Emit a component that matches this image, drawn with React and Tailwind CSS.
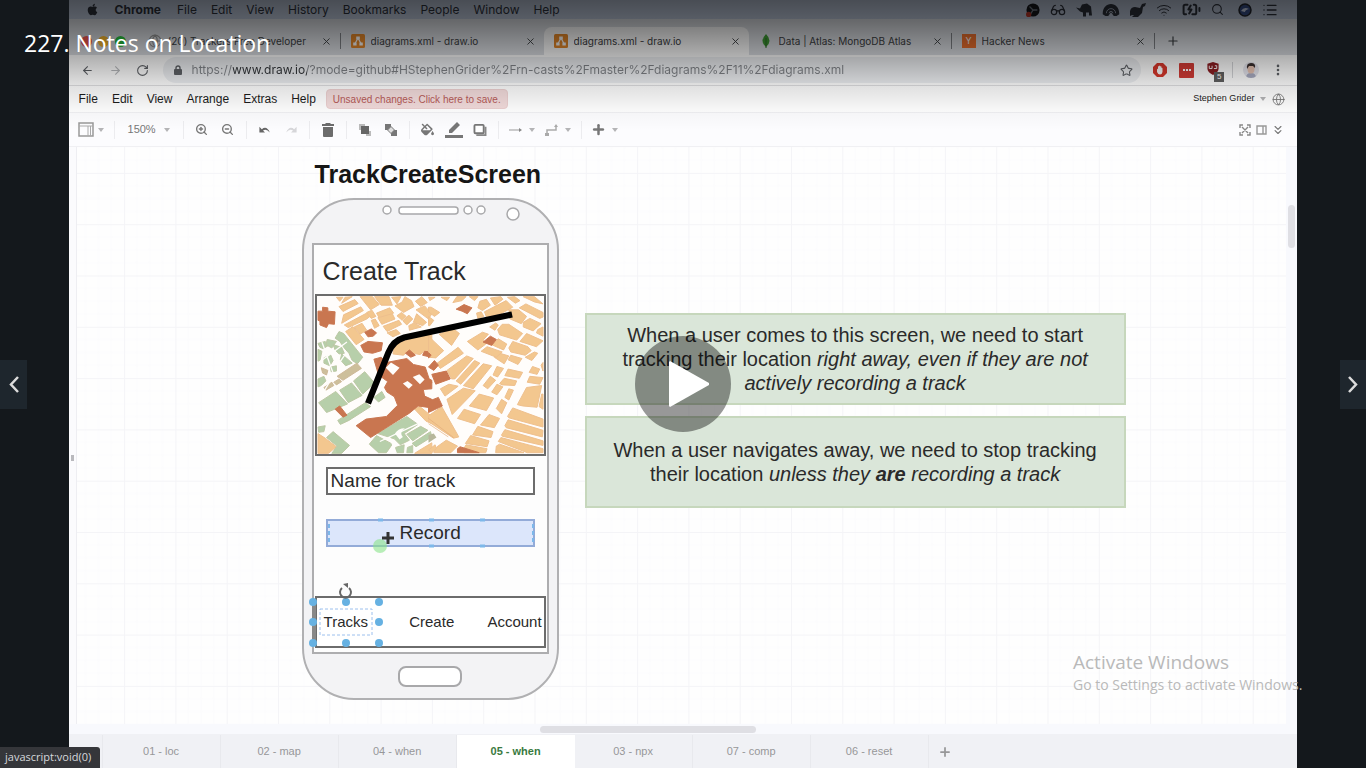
import React from "react";
import {
  ArrowLeft, ArrowRight, RotateCw, Lock, Star, MoreVertical, X, Plus, Search, Wifi, List, Globe,
  ChevronsDown, ZoomIn, ZoomOut, Glasses, BatteryCharging,
} from "lucide-react";
import { FaApple, FaFillDrip } from "react-icons/fa";

const macMenus = ["File", "Edit", "View", "History", "Bookmarks", "People", "Window", "Help"];
const drawMenus = ["File", "Edit", "View", "Arrange", "Extras", "Help"];
const pages = ["01 - loc", "02 - map", "04 - when", "05 - when", "03 - npx", "07 - comp", "06 - reset"];

const mapLeftOrange = [
  "68,14 88,14 78,26", "94,14 116,12 84,32", "76,42 124,21 134,33 88,57", "90,67 142,43 150,54 84,93",
  "92,98 160,62 170,72 160,80 104,106", "96,118 118,103 152,142 128,158", "122,104 146,93 160,114 140,126",
  "140,12 178,12 198,36 172,52", "184,12 228,12 238,38 204,38", "160,60 176,53 188,72 174,78",
  "190,62 230,46 242,62 200,80", "174,84 186,80 198,100 184,108", "194,76 238,64 246,80 206,96",
  "210,102 258,84 266,96 222,118", "222,122 250,112 262,124 240,134", "236,14 264,12 252,34",
  "246,40 268,28 276,12 296,24 304,42 272,60", "252,70 266,60 280,72 268,84", "270,86 288,68 300,80 282,98",
  "308,26 328,12 344,30 324,42", "310,52 336,40 358,64 348,80", "312,64 342,90 330,100 302,90",
  "288,100 304,92 326,104 290,114", "242,172 252,152 358,122 358,188 336,178 322,188 300,184 286,176 272,190 240,186",
  "12,428 34,442 68,468 44,488 12,488", "304,352 322,346 358,376 358,398 340,390", "318,480 358,456 358,488 306,488",
];
const mapLeftBrown = [
  "12,56 26,56 26,44 42,46 42,56 64,58 62,96 44,94 38,106 18,98 18,86 12,84",
  "154,120 174,110 190,122 180,132 164,134", "142,160 164,148 208,152 204,176 178,184 152,180",
  "278,184 290,174 308,190 294,196", "330,190 336,178 352,180 356,196",
  "182,202 204,196 220,212 282,200 302,218 338,226 350,262 358,266 358,292 332,294 336,314 358,324 358,350 316,344 290,366 172,440 128,404 158,384 220,376 254,342 244,316 222,302 214,288 224,270 196,250",
  "64,354 78,344 100,372 88,378",
];
const mapLeftGreen = [
  "12,154 34,148 44,160 28,170 18,166", "40,142 68,148 54,168 36,158", "76,118 90,124 148,196 132,216 116,206 106,184 92,168 78,148 64,138",
  "30,198 50,188 58,206 48,222 30,214", "58,158 84,166 92,184 76,186 64,174", "84,186 116,214 96,222 80,204", "12,172 24,178 18,206 12,208",
  "12,262 30,254 36,268 22,282 12,286", "50,226 68,222 68,238 52,240", "120,268 154,240 184,274 148,308",
  "78,296 114,274 146,312 104,334", "14,334 66,300 102,338 38,364", "182,318 206,300 216,318 196,332",
  "72,388 156,334 172,346 106,388 80,400", "12,408 34,404 30,422 14,424", "38,440 58,422 108,464 84,488 54,488 70,466",
  "194,428 268,384 282,376 316,400 274,428 290,448 262,462 244,444", "168,460 190,434 238,460 220,486 196,486",
  "282,430 324,406 346,418 300,450", "298,458 354,422 358,438 310,468", "248,470 274,462 272,486 250,486", "284,470 300,464 300,486 282,486",
];
const mapLeftKhaki = ["30,288 54,272 60,282 36,296", "70,254 130,214 144,230 88,266", "22,228 42,236 38,250 26,244", "60,272 76,262 84,270 68,280"];
const mapRightOrange = [
  "0,14 20,14 4,24", "0,44 8,44 34,60 18,72 0,58", "0,72 16,84 4,100 0,100", "38,14 64,14 56,24", "74,30 86,12 114,12 102,24",
  "124,12 150,12 140,24", "156,26 176,20 188,38 164,54 150,46", "146,62 160,58 168,72 150,78", "170,58 236,24 256,44 220,64 176,74",
  "188,16 220,12 226,20 202,38", "240,14 262,12 278,24 264,32", "288,12 322,12 348,34 322,28", "276,46 296,34 348,60 348,74 338,78",
  "244,52 274,52 298,72 282,94 248,80", "288,90 308,78 342,94 318,116 288,104", "210,112 224,96 244,96 286,124 268,144 216,128",
  "186,104 204,92 212,98 202,114", "332,112 348,104 348,132 328,122", "278,148 298,124 348,146 328,164",
  "244,168 256,148 302,164 312,176 294,190 250,180", "294,196 322,180 332,184 314,206", "250,190 284,200 272,218 242,204",
  "200,196 210,182 244,192 230,216", "160,178 178,164 224,180 206,196", "118,148 164,120 182,126 166,144 174,156 150,174",
  "192,158 212,140 238,156 228,174", "32,126 74,108 94,124 70,160", "0,132 46,176 22,198 0,196",
  "24,216 90,166 106,184 36,230", "56,236 116,192 136,200 80,262 70,262", "84,268 140,206 156,214 98,278", "106,282 166,216 192,222 136,292",
  "36,292 62,278 90,284 50,314", "56,324 106,290 142,298 72,370", "196,250 208,224 228,230 210,256", "166,282 188,254 204,266 180,292",
  "232,252 242,232 286,242 276,260", "216,276 230,260 268,268 262,282 224,280", "192,302 208,278 226,286 208,310", "232,318 244,292 258,296 244,326",
  "306,242 316,224 338,232 330,248", "300,272 308,254 348,258 338,278", "342,220 348,212 348,238", "270,340 298,288 344,282 330,348 286,344",
  "124,344 154,308 198,320 176,358", "206,352 222,324 238,334 222,368", "88,382 108,354 158,370 140,398", "158,402 184,370 216,382 200,410",
  "336,346 344,308 348,308 348,354", "240,376 256,350 348,384 348,408 244,380", "232,404 242,386 348,418 346,438 236,410",
  "222,432 232,416 348,450 348,464 224,436", "212,452 220,440 348,474 348,486 300,486", "206,466 216,460 290,486 204,486",
  "134,432 150,406 196,422 190,440", "112,458 128,434 184,450 178,468", "106,476 114,462 178,474 174,486 108,486",
  "0,374 40,346 92,438 76,442 0,392", "26,468 54,448 88,466 68,486 16,486", "0,478 20,462 24,474 10,486",
];
const mapRightBrown = [
  "84,50 108,36 132,46 118,64 102,56", "166,150 188,132 206,142 192,160", "0,226 18,206 30,220 16,236", "10,248 54,238 66,262 22,278",
  "0,262 10,272 0,286", "0,330 30,318 42,344 0,364", "88,474 96,468 154,486 88,486", "0,182 8,190 0,198",
];

function Polys({ list, fill, edge }) {
  return list.map((p) => <polygon key={p} points={p} fill={fill} stroke={edge} strokeWidth="3" strokeLinejoin="round" />);
}

function StreetMap() {
  return (
    <svg viewBox="75 436 690 480" preserveAspectRatio="none" className="block h-full w-full" role="img" aria-label="Street map">
      <rect x="75" y="436" width="690" height="480" fill="#fffdfb" />
      <g transform="translate(66 426)">
        <Polys list={mapLeftOrange} fill="#f3c78f" edge="#eebf8d" />
        <Polys list={mapLeftGreen} fill="#b7cfaa" edge="#bcc7a4" />
        <Polys list={mapLeftKhaki} fill="#cdbf9b" edge="#cdb898" />
        <Polys list={mapLeftBrown} fill="#c97650" edge="#c97650" />
        <g fill="#fffdfb">
          <path d="M218 228l16-16 26 16-20 22zM270 276l14-8 16 12-12 12zM300 256l20-8 16 16-14 14z" />
          <path d="M246 428q10-16 30-16q-18 14-6 26l-10 8z" />
        </g>
        <g fill="none" stroke="#fffdfb" strokeWidth="4">
          <path d="M12 214L100 150M24 150L60 250M60 250L30 300M200 452L320 396M230 440L250 488M100 180L72 220" />
        </g>
      </g>
      <g transform="translate(414 426)">
        <Polys list={mapRightOrange} fill="#f3c78f" edge="#eebf8d" />
        <Polys list={mapRightBrown} fill="#c97650" edge="#c97650" />
        <path d="M0 382L76 440M0 398L60 438" stroke="#e2ab78" strokeWidth="2" />
        <polygon points="0,432 16,428 24,440 0,456" fill="#b7b79b" />
      </g>
      <path d="M230 762L292 608Q306 572 340 562L668 492" fill="none" stroke="#000" strokeWidth="19" />
    </svg>
  );
}

function Caret() {
  return (
    <svg viewBox="0 0 6 4" className="h-1 w-1.5 shrink-0 fill-[#b4b4b6]"><path d="M0 0h6L3 4z" /></svg>
  );
}

function Sep() {
  return <span className="mx-[5px] h-[18px] w-px shrink-0 bg-[#ececef]" />;
}

function Tool({ label, children }) {
  return (
    <button aria-label={label} className="flex h-6 w-[26px] shrink-0 items-center justify-center text-[#777777]">{children}</button>
  );
}

function DrawIcon() {
  return (
    <svg viewBox="0 0 14 14" className="h-3.5 w-3.5 shrink-0">
      <rect width="14" height="14" rx="1.5" fill="#e88a2a" />
      <path d="M7 4L3.8 10M7 4l3.2 6" stroke="#fff" strokeWidth="1.2" />
      <path d="M5.2 2.5h3.6v3H5.2zM2.2 8.5h3.4v3H2.2zM8.4 8.5h3.4v3H8.4z" fill="#fff" />
    </svg>
  );
}

function BrowserTab({ icon, title, active, divider }) {
  const shape = active
    ? "flex h-7 w-[205px] shrink-0 items-center rounded-t-lg bg-white pl-2.5 pr-2"
    : divider
      ? "flex h-7 w-[203px] shrink-0 items-center pl-2.5"
      : "flex h-7 w-[203px] shrink-0 items-center pl-2.5 pr-2";
  return (
    <div className={shape}>
      {icon}
      <a href="#tab" className="ml-1.5 min-w-0 flex-1 overflow-hidden whitespace-nowrap font-['Inter',sans-serif] text-[10px] text-[#3c4043]">{title}</a>
      <button aria-label={"Close " + title} className="text-[#3c4043]"><X size={11} strokeWidth={2} /></button>
      {divider && <span className="ml-2 h-4 w-px bg-[#808388]" />}
    </div>
  );
}

function MenuBar() {
  return (
    <div className="flex h-[19px] shrink-0 items-center bg-[#bfcadd] pl-[17px] pr-[19px] font-['Inter',sans-serif] text-[12px] text-[#2c313b]">
      <FaApple size={13} className="mr-4" />
      <button className="mr-4 font-bold">Chrome</button>
      <nav className="flex gap-3.5">
        {macMenus.map((m) => <button key={m}>{m}</button>)}
      </nav>
      <div className="ml-auto flex items-center gap-2.5">
        <svg viewBox="0 0 16 16" className="h-3.5 w-3.5"><circle cx="8" cy="8" r="7.5" fill="#15171c" /><path d="M8 8L4 4M8 8h5M8 8l-3 5" stroke="#77808e" strokeWidth="1.5" /><circle cx="3" cy="13" r="3" fill="#c0392b" /></svg>
        <Glasses size={16} strokeWidth={1.8} />
        <svg viewBox="0 0 16 13" className="h-3.5 w-4"><path fill="currentColor" d="M0 4l4 1 2-4 5-1 4 3 1 9h-3V9h-3v4H7V9L4 8z" /></svg>
        <svg viewBox="0 0 18 13" className="h-3 w-[18px]"><path fill="currentColor" d="M0 11C0 4 4 0 9 0s9 4 9 11l-3 2h-3l-3-4-3 4H3z" /><path d="M4 10a5 5 0 0 1 10 0M7 10a2 2 0 0 1 4 0" fill="none" stroke="#aab4c6" /></svg>
        <svg viewBox="0 0 16 14" className="h-3.5 w-4"><path fill="currentColor" d="M0 8q1-4 5-4l5 1 2-4 4-1-1 3-2 1-1 6-4 4H2l2-2q-3 0-4 1z" /></svg>
        <Wifi size={16} strokeWidth={1.5} />
        <BatteryCharging size={19} strokeWidth={2.5} />
        <Search size={13} />
        <svg viewBox="0 0 14 14" className="ml-1 h-3.5 w-3.5"><circle cx="7" cy="7" r="6" fill="#38508c" stroke="#20242c" strokeWidth="1.5" /><path d="M3 8q3-5 8-2q-4 1-4 3z" fill="#d4def4" /></svg>
        <List size={16} />
      </div>
    </div>
  );
}

function TabStrip() {
  return (
    <div className="flex h-9 shrink-0 items-end bg-[#dee1e6]">
      <div className="flex h-7 w-[69px] shrink-0 items-center gap-1.5 pl-3">
        <span className="h-[11px] w-[11px] rounded-full bg-[#fb5a52]" />
        <span className="h-[11px] w-[11px] rounded-full bg-[#fdbc2e]" />
        <span className="h-[11px] w-[11px] rounded-full bg-[#2ac840]" />
      </div>
      <BrowserTab icon={<Globe size={14} className="shrink-0 text-[#999]" />} title="(20) Trackers Free Developer" divider />
      <BrowserTab icon={<DrawIcon />} title="diagrams.xml - draw.io" />
      <BrowserTab icon={<DrawIcon />} title="diagrams.xml - draw.io" active />
      <BrowserTab
        icon={<svg viewBox="0 0 14 14" className="h-3.5 w-3.5 shrink-0"><path d="M7 0Q14 7 7 13Q0 7 7 0z" fill="#3f9c35" /><path d="M7 4v10" stroke="#2d7028" /></svg>}
        title="Data | Atlas: MongoDB Atlas" divider
      />
      <BrowserTab
        icon={<span className="flex h-3.5 w-3.5 shrink-0 items-center justify-center bg-[#f0722f] font-['Inter',sans-serif] text-[9px] text-white">Y</span>}
        title="Hacker News" divider
      />
      <button aria-label="New tab" className="flex h-7 w-9 items-center justify-center text-[#3c4043]"><Plus size={14} /></button>
    </div>
  );
}

function AddressBar() {
  return (
    <div className="flex h-[31px] shrink-0 items-center border-b border-[#e0e0e2] bg-white pl-3 pr-3 text-[#5f6267]">
      <button aria-label="Back" className="mr-[15px]"><ArrowLeft size={13} /></button>
      <button aria-label="Forward" className="mr-3.5 text-[#b8babd]"><ArrowRight size={13} /></button>
      <button aria-label="Reload" className="mr-3.5"><RotateCw size={13} /></button>
      <div className="flex h-[26px] min-w-0 flex-1 items-center rounded-full bg-[#eef0f3] pl-2.5 pr-2">
        <svg viewBox="0 0 8 10" className="ml-px mr-2.5 h-2.5 w-2 shrink-0"><rect y="4" width="8" height="6" rx="1" fill="#5f6267" /><path d="M2 5V3a2 2 0 0 1 4 0v2" fill="none" stroke="#5f6267" strokeWidth="1.4" /></svg>
        <input
          aria-label="Address"
          defaultValue="https://www.draw.io/?mode=github#HStephenGrider%2Frn-casts%2Fmaster%2Fdiagrams%2F11%2Fdiagrams.xml"
          className="min-w-0 flex-1 bg-[linear-gradient(90deg,#808388_41px,#2f3236_41px,#2f3236_115px,#808388_115px)] bg-clip-text font-['Inter',sans-serif] text-[12px] text-transparent outline-none"
        />
        <Star size={13} className="shrink-0" />
      </div>
      <div className="ml-3 flex items-center gap-3">
        <svg viewBox="0 0 14 14" className="h-3.5 w-3.5"><path d="M4 0h6l4 4v6l-4 4H4l-4-4V4z" fill="#d9382c" /><path d="M4 6q1-1 1 1V3.500q1-.8 1 0V3q1-.8 1.300 0v.500q1-.6 1.200.300V5q1-.5 1 .5V9q-.5 2.500-2.500 2.500T4 9z" fill="#fff" /></svg>
        <span className="flex h-[15px] w-[15px] items-center justify-center gap-px rounded-[1px] bg-[#d33c36]">
          <i className="h-0.5 w-0.5 bg-white" /><i className="h-0.5 w-0.5 bg-white" /><i className="h-0.5 w-0.5 bg-white" />
        </span>
        <span className="relative h-4 w-[18px]">
          <svg viewBox="0 0 14 15" className="h-3.5 w-3.5"><path d="M7 0l6 2v5q0 4-6 7Q1 11 1 7V2z" fill="#8c1d22" /><path d="M3 4v3h3V4M9 4h2v3H8" stroke="#fff" fill="none" /></svg>
          <span className="absolute -bottom-1 right-0 bg-[#606060] px-[3px] text-[8px] leading-[10px] text-white">5</span>
        </span>
        <span className="-ml-1 h-4 w-px bg-[#d4d5d8]" />
      </div>
      <svg viewBox="0 0 16 16" className="ml-2.5 h-4 w-4 rounded-full">
        <rect width="16" height="16" fill="#e6e6ee" /><path d="M3 16q0-5 5-5t5 5z" fill="#a9acc2" /><ellipse cx="8" cy="7" rx="3.5" ry="4.5" fill="#e9c5b4" /><path d="M4 7q-1-6 4-6t4 5l-2-2H6z" fill="#3a2f2e" />
      </svg>
      <button aria-label="Browser menu" className="ml-3"><MoreVertical size={14} strokeWidth={2.5} /></button>
    </div>
  );
}

function DrawMenu() {
  return (
    <div className="flex h-[26px] shrink-0 items-center bg-white pl-2.5 pr-3 text-[12px] text-[#1c1c1c]">
      <nav className="flex gap-3.5">
        {drawMenus.map((m) => <button key={m}>{m}</button>)}
      </nav>
      <button className="ml-2.5 h-5 rounded-sm border border-[#ecd0d0] bg-[#f2dbdb] px-1.5 text-[10px] text-[#b65a58]">Unsaved changes. Click here to save.</button>
      <button className="ml-auto flex items-center gap-1.5 text-[9px]">Stephen Grider <Caret /></button>
      <button aria-label="Language" className="ml-1.5 text-[#777]"><Globe size={13} strokeWidth={1.6} /></button>
    </div>
  );
}

function Toolbar() {
  return (
    <div className="flex h-[35px] shrink-0 items-center border-y border-[#f0f0f3] bg-[#fcfcfe] pl-1 pr-3 text-[#777]">
      <button aria-label="View" className="flex w-9 shrink-0 items-center justify-center gap-1">
        <svg viewBox="0 0 16 15" className="h-[15px] w-4"><rect x="1" y="1" width="14" height="13" fill="none" stroke="#999" strokeWidth="1.5" /><path d="M1 4h14M10 4v10M12.5 4v10" stroke="#aaa" /></svg>
        <Caret />
      </button>
      <Sep />
      <button className="flex w-[58px] shrink-0 items-center justify-center gap-2 text-[11px]">150% <Caret /></button>
      <Sep />
      <Tool label="Zoom in"><ZoomIn size={13} strokeWidth={2.5} /></Tool>
      <Tool label="Zoom out"><ZoomOut size={13} strokeWidth={2.5} /></Tool>
      <Sep />
      <Tool label="Undo"><svg viewBox="0 0 14 10" className="h-2 w-3"><path d="M0 1v7h7L4.5 5.5Q9 3 13 8Q9-1 3 4z" fill="#666" /></svg></Tool>
      <Tool label="Redo"><svg viewBox="0 0 14 10" className="h-2 w-3"><path d="M14 1v7H7l2.500-2.500Q5 3 1 8Q5-1 11 4z" fill="#d6d6d9" /></svg></Tool>
      <Sep />
      <Tool label="Delete"><svg viewBox="0 0 12 14" className="h-3.5 w-3"><path d="M4 0h4l1 1h3v2H0V1h3zM1 4h10v9q0 1-1 1H2q-1 0-1-1z" fill="#6c6c6c" /></svg></Tool>
      <Sep />
      <Tool label="To front"><svg viewBox="0 0 14 14" className="h-3.5 w-3.5"><path d="M1 1h6v6H1zM8 8h5v5H8z" fill="#bbb" /><rect x="3" y="3" width="8" height="8" fill="#666" /></svg></Tool>
      <Tool label="To back"><svg viewBox="0 0 14 14" className="h-3.5 w-3.5"><rect x="1" y="1" width="6" height="6" fill="#777" /><rect x="7" y="7" width="6" height="6" fill="#777" /><path d="M3.500 7L7 3.500 10.500 7 7 10.500z" fill="#ddd" stroke="#777" /></svg></Tool>
      <Sep />
      <Tool label="Fill colour"><FaFillDrip size={13} /></Tool>
      <Tool label="Line colour"><svg viewBox="0 0 18 16" className="h-4 w-[18px]"><path d="M4 11V8l8-8 3 3-8 8zM0 13h18v3H0z" fill="#777" /></svg></Tool>
      <Tool label="Shadow"><svg viewBox="0 0 14 13" className="h-3 w-3.5"><path d="M3 12h10V3" fill="none" stroke="#888" strokeWidth="2" /><rect x="1" y="1" width="10" height="9" rx="1" fill="#fff" stroke="#777" strokeWidth="2" /></svg></Tool>
      <Sep />
      <button aria-label="Connection" className="flex w-9 shrink-0 items-center justify-center gap-1.5"><svg viewBox="0 0 14 8" className="h-2 w-3.5"><path d="M0 4h11" stroke="#999" /><path d="M10 2l3 2-3 2z" fill="#888" /></svg><Caret /></button>
      <button aria-label="Waypoints" className="flex w-9 shrink-0 items-center justify-center gap-1.5"><svg viewBox="0 0 14 14" className="h-3.5 w-3.5"><path d="M2 12V7h9V3" stroke="#aaa" fill="none" strokeWidth="1.5" /><path d="M9 4l2-3 2 3zM0 10h4v3H0z" fill="#aaa" /></svg><Caret /></button>
      <Sep />
      <button aria-label="Insert" className="flex w-9 shrink-0 items-center justify-center gap-1.5"><Plus size={15} strokeWidth={4} /><Caret /></button>
      <div className="ml-auto flex items-center gap-1">
        <button aria-label="Fullscreen"><svg viewBox="0 0 12 12" className="h-3 w-3"><path d="M1 4V1h3M8 1h3v3M11 8v3H8M4 11H1V8M3 3l6 6M9 3L3 9" fill="none" stroke="#888" strokeWidth="1.4" /></svg></button>
        <button aria-label="Format panel"><svg viewBox="0 0 12 12" className="h-3 w-3"><path d="M2 2h9v8H2zM8 2v8" fill="none" stroke="#999" strokeWidth="1.4" /></svg></button>
        <button aria-label="Collapse"><ChevronsDown size={14} strokeWidth={2} /></button>
      </div>
    </div>
  );
}

const handles = [[11, 404], [44, 404], [77, 404], [11, 424], [77, 424], [11, 445], [44, 445], [77, 445]];

function Phone() {
  return (
    <div className="absolute left-[225px] top-[51px] flex h-[502px] w-[257px] flex-col rounded-[52px] border-2 border-[#b0b0b2] bg-[#f3f3f5] px-2 text-[#2a2a2a]">
      <svg viewBox="0 0 236 43" className="h-[43px] w-[236px] shrink-0 fill-white stroke-[#a8a8aa]" strokeWidth="1.5">
        <circle cx="75" cy="10" r="4" /><rect x="87" y="7" width="59" height="7" rx="3" /><circle cx="156" cy="10" r="4" /><circle cx="169" cy="10" r="4" /><circle cx="201" cy="14" r="6" />
      </svg>
      <div className="flex h-[411px] shrink-0 flex-col border-2 border-[#adadaf] bg-white/80 px-px">
        <h2 className="flex h-[49px] shrink-0 items-center pl-2 pt-1 text-[25px]">Create Track</h2>
        <div className="h-[162px] shrink-0 border-2 border-[#6c6c6c]"><StreetMap /></div>
        <div className="mx-[11px] mt-[11px] flex h-7 shrink-0 items-center border-2 border-[#6c6c6c] bg-white px-[3px] pt-px text-[19px]">Name for track</div>
        <div className="mx-[11px] mt-6 flex h-7 shrink-0 items-center justify-center border-2 border-[#93abd8] bg-[#dce6fb] pt-px text-[19px]">Record</div>
        <div className="mb-1 mt-auto flex h-[52px] shrink-0 items-center justify-between border-2 border-[#6c6c6c] bg-white pl-[7px] pr-0.5 pt-px text-[15px]">
          <span>Tracks</span><span className="pl-2">Create</span><span>Account</span>
        </div>
      </div>
      <div className="mx-auto mt-3 h-[21px] w-16 shrink-0 rounded-lg border-2 border-[#a8a8aa] bg-white" />
      <svg viewBox="0 0 258 502" className="pointer-events-none absolute -left-0.5 -top-0.5 h-[502px] w-[258px]">
        <path d="M12 406v38" stroke="#888" strokeWidth="4" />
        <rect x="18" y="411" width="52" height="26" fill="none" stroke="#9cc0ee" strokeDasharray="3 2" />
        {handles.map(([x, y]) => <circle key={x + "-" + y} cx={x} cy={y} r="4" fill="#66b1e2" />)}
        <path d="M40 390a5.500 5.500 0 1 0 7 0" fill="none" stroke="#666" strokeWidth="2" /><path d="M41 386l5-1 0 5z" fill="#666" />
        <path d="M27 326v18M231 326v18" stroke="#7db8ea" strokeWidth="2" strokeDasharray="4 3" />
        <path d="M76 322h5M127 322h5M178 322h5M127 348h5M178 348h5" stroke="#7db8ea" strokeWidth="3" />
        <circle cx="78" cy="348" r="7" fill="#8be58b" fillOpacity="0.6" />
        <path d="M86 334v12M80 340h12" stroke="#333" strokeWidth="3" />
      </svg>
    </div>
  );
}

function Note({ place, children }) {
  return (
    <div className={"absolute left-[508px] flex h-[92px] w-[541px] items-center justify-center border-2 border-[#c6d7bc] bg-[#dae6d9] px-5 text-center text-[20px] leading-6 text-[#2a2a2a] " + place}>
      <p>{children}</p>
    </div>
  );
}

function Canvas() {
  return (
    <div className="flex min-h-0 flex-1 flex-col">
      <div className="flex min-h-0 flex-1">
        <div className="flex w-2 shrink-0 items-center justify-center border-r border-[#eeeef2] bg-[#fbfbfd]">
          <span className="mt-11 h-1.5 w-[3px] bg-[#b9b9bd]" />
        </div>
        <div className="relative min-w-0 flex-1 overflow-hidden bg-[#fefefe]">
          <svg className="absolute inset-0 h-full w-full" aria-hidden="true">
            <defs>
              <pattern id="grid" x="47.1" y="25.9" width="51.3" height="51.3" patternUnits="userSpaceOnUse">
                <path d="M12.800 0v51.300M25.600 0v51.300M38.500 0v51.300M0 12.800h51.300M0 25.600h51.300M0 38.500h51.300" stroke="#fbfbfd" fill="none" />
                <path d="M0.500 0v51.300M0 0.500h51.300" stroke="#f4f4f7" fill="none" />
              </pattern>
            </defs>
            <rect width="100%" height="100%" fill="url(#grid)" />
          </svg>
          <h1 className="absolute left-[238px] top-3 text-[25px] font-bold leading-[30px] text-[#161616]">TrackCreateScreen</h1>
          <Phone />
          <Note place="top-[166px]">
            When a user comes to this screen, we need to start<br />tracking their location <em>right away, even if they are not<br />actively recording a track</em>
          </Note>
          <Note place="top-[269px]">
            When a user navigates away, we need to stop tracking<br />their location <em>unless they <b>are</b> recording a track</em>
          </Note>
        </div>
        <div className="w-[11px] shrink-0 bg-[#f8f9fd] pl-0.5 pt-[58px]"><div className="h-[43px] w-[7px] rounded-full bg-[#dfdfe4]" /></div>
      </div>
      <div className="flex h-2.5 shrink-0 items-center bg-[#f8f9fd] pl-[471px]"><div className="h-[7px] w-[216px] rounded-full bg-[#dfdfe4]" /></div>
      <div className="flex h-[34px] shrink-0 bg-[#f0f1f5] pt-px text-[11px] text-[#979799]">
        <button aria-label="Pages" className="flex w-[34px] shrink-0 items-center justify-center border-r border-[#e8e9ed]"><MoreVertical size={12} /></button>
        {pages.map((p) => (
          <button key={p} className={p === "05 - when"
            ? "w-[118px] shrink-0 bg-white font-bold text-[#3a7a3e]"
            : "w-[118px] shrink-0 border-r border-[#e8e9ed]"}>{p}</button>
        ))}
        <button aria-label="Insert page" className="flex w-8 items-center justify-center"><Plus size={14} strokeWidth={3} /></button>
      </div>
    </div>
  );
}

export default function App() {
  return (
    <main className="relative flex h-screen justify-center overflow-hidden bg-[#14181c] font-['Liberation_Sans',Arial,sans-serif]">
      <section className="relative flex aspect-[16/10] h-full flex-col overflow-hidden bg-white">
        <MenuBar />
        <TabStrip />
        <AddressBar />
        <DrawMenu />
        <Toolbar />
        <Canvas />
        <div className="pointer-events-none absolute inset-x-0 top-0 h-[130px] bg-[linear-gradient(180deg,rgba(0,0,0,0.62)_0px,rgba(0,0,0,0.53)_22px,rgba(0,0,0,0.34)_52px,rgba(0,0,0,0.13)_84px,rgba(0,0,0,0.03)_110px,rgba(0,0,0,0)_130px)]" />
      </section>
      <h1 className="absolute left-6 top-7 font-['Open_Sans',sans-serif] text-[23px] leading-[30px] text-white">227. Notes on Location</h1>
      <button aria-label="Play" className="absolute left-1/2 top-1/2 flex h-24 w-24 -translate-x-1/2 -translate-y-1/2 items-center justify-center rounded-full bg-black/40">
        <svg viewBox="0 0 40 46" className="ml-3 h-[46px] w-10 fill-white"><path d="M0 1L1 0l39 22v2L1 46l-1-1z" /></svg>
      </button>
      <button aria-label="Previous" className="absolute left-0 top-[360px] flex h-[49px] w-[27px] items-center justify-center bg-[#1e262d]">
        <svg viewBox="0 0 10 17" className="h-[17px] w-2.5"><path d="M9 1L2 8.5 9 16" fill="none" stroke="#dcdcdc" strokeWidth="2.5" /></svg>
      </button>
      <button aria-label="Next" className="absolute right-0 top-[360px] flex h-[49px] w-[26px] items-center justify-center bg-[#1e262d]">
        <svg viewBox="0 0 10 17" className="h-[17px] w-2.5"><path d="M1 1l7 7.500L1 16" fill="none" stroke="#dcdcdc" strokeWidth="2.5" /></svg>
      </button>
      <aside className="pointer-events-none absolute bottom-[72px] right-[57px] w-[236px] font-['Open_Sans',sans-serif] text-[#b9b9b9]">
        <p className="text-[19px] leading-6">Activate Windows</p>
        <p className="text-[14px] leading-[22px]">Go to Settings to activate Windows.</p>
      </aside>
      <div className="absolute bottom-0 left-0 flex h-[21px] w-[100px] items-center rounded-tr-[3px] bg-[#35363a] pl-[5px] font-['Open_Sans',sans-serif] text-[11px] text-[#d5d8dc]">javascript:void(0)</div>
    </main>
  );
}
